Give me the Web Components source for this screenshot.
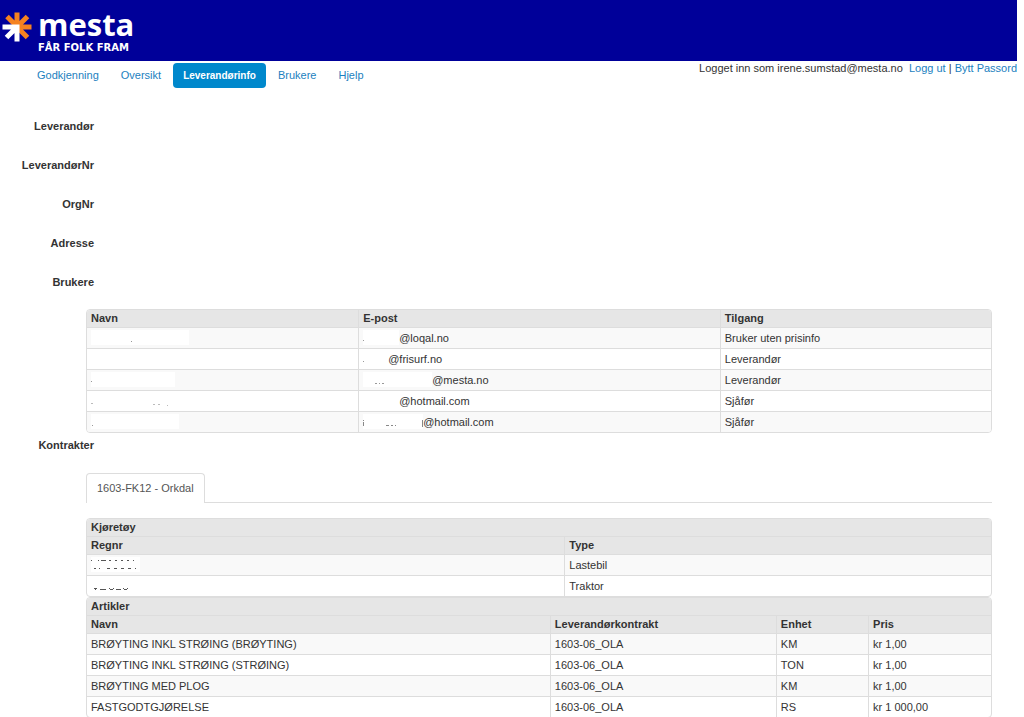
<!DOCTYPE html>
<html lang="no">
<head>
<meta charset="utf-8">
<title>Mesta – Leverandørinfo</title>
<style>
  body { margin: 0 7px 0 0; background: #fff; color: #333; font: 11px/20px "Liberation Sans", Arial, sans-serif; }
</style>
</head>
<body>
<mesta-header></mesta-header>
<mesta-nav user="irene.sumstad@mesta.no"></mesta-nav>
<supplier-page></supplier-page>

<script>
class MestaHeader extends HTMLElement {
  constructor() {
    super();
    this.attachShadow({ mode: 'open' }).innerHTML = `
      <style>
        :host { display: block; background: #000099; color: #fff; }
        .brand { display: flex; gap: 6px; height: 61px; padding-left: 2px; box-sizing: border-box; }
        svg { width: 30px; height: 30px; margin-top: 12px; }
        .words { display: flex; flex-direction: column; gap: 3px; padding-top: 8px; }
        .name { font: bold 31px/32px "Open Sans", sans-serif; }
        .motto { font: bold 10px/10px "DejaVu Sans", sans-serif; }
      </style>
      <div class="brand">
        <svg viewBox="0 0 30 30" aria-hidden="true" fill="none" stroke-width="5">
          <path stroke="#f58220" d="M15 0.5V12M14 15H29.5M5 4.5L14 13.5M25.5 4.5L16 14M16 16L25.5 25.5"/>
          <path stroke="#fff" d="M0.5 15H15V29.5M15 15L4.5 25.5"/>
        </svg>
        <div class="words"><span class="name">mesta</span><span class="motto">FÅR FOLK FRAM</span></div>
      </div>`;
  }
}
customElements.define('mesta-header', MestaHeader);

class MestaNav extends HTMLElement {
  constructor() {
    super();
    const items = ['Godkjenning', 'Oversikt', 'Leverandørinfo', 'Brukere', 'Hjelp'];
    this.attachShadow({ mode: 'open' }).innerHTML = `
      <style>
        :host { display: flex; justify-content: space-between; align-items: flex-start; }
        nav { display: flex; gap: 2px; padding: 2px 0 0 27px; }
        a { color: #1c7fc0; text-decoration: none; }
        nav a { padding: 0 10px; line-height: 25px; border-radius: 4px; }
        nav a.active { background: #0088cc; color: #fff; font-weight: bold; font-size: 10px; }
        .user { line-height: 15px; white-space: nowrap; }
      </style>
      <nav>${items.map(t => `<a href="#"${t === 'Leverandørinfo' ? ' class="active" aria-current="page"' : ''}>${t}</a>`).join('')}</nav>
      <div class="user">Logget inn som ${this.getAttribute('user')}&nbsp; <a href="#">Logg ut</a> | <a href="#">Bytt Passord</a></div>`;
  }
}
customElements.define('mesta-nav', MestaNav);

/* White patch that hides personal data; marks are the few strokes left visible. */
class HiddenText extends HTMLElement {
  constructor() {
    super();
    this.attachShadow({ mode: 'open' }).innerHTML = `
      <style>
        :host { display: inline-block; vertical-align: top; }
        svg { display: block; height: 18px; }
      </style>
      <svg width="${this.getAttribute('w')}" aria-hidden="true">
        <rect y="2" width="100%" height="15" fill="#fff"/>
        <path d="${this.getAttribute('marks') || ''}" fill="none" stroke="${this.getAttribute('ink') || '#777'}"/>
      </svg>`;
  }
}
customElements.define('hidden-text', HiddenText);

class DataTable extends HTMLElement {
  set data({ title, widths, head, rows }) {
    const root = this.shadowRoot || this.attachShadow({ mode: 'open' });
    root.innerHTML = `
      <style>
        :host { display: block; }
        table { width: 100%; table-layout: fixed; border: 1px solid #ddd; border-radius: 4px;
                border-collapse: separate; border-spacing: 0; overflow: hidden; }
        th, td { padding: 0 4px; text-align: left; border-top: 1px solid #ddd; white-space: nowrap; }
        th { background: #e6e6e6; line-height: 17px; }
        td { line-height: 20px; }
        td + td, th + th { border-left: 1px solid #ddd; }
        thead tr:first-child th { border-top: 0; }
        tbody tr:nth-child(odd) td { background: #f9f9f9; }
      </style>
      <table>
        <colgroup>${widths.map(w => `<col style="width:${w}">`).join('')}</colgroup>
        <thead>
          ${title ? `<tr><th colspan="${head.length}">${title}</th></tr>` : ''}
          <tr>${head.map(h => `<th scope="col">${h}</th>`).join('')}</tr>
        </thead>
        <tbody>${rows.map(r => `<tr>${r.map(c => `<td>${c}</td>`).join('')}</tr>`).join('')}</tbody>
      </table>`;
  }
}
customElements.define('data-table', DataTable);

class FieldRow extends HTMLElement {
  constructor() {
    super();
    this.attachShadow({ mode: 'open' }).innerHTML = `
      <style>
        :host { display: block; }
        .label { width: 94px; text-align: right; font-weight: bold; }
      </style>
      <div class="label"><slot></slot></div>`;
  }
}
customElements.define('field-row', FieldRow);

class TabBar extends HTMLElement {
  constructor() {
    super();
    this.attachShadow({ mode: 'open' }).innerHTML = `
      <style>
        :host { display: flex; border-bottom: 1px solid #ddd; }
        a { padding: 0 10px; border: 1px solid #ddd; border-bottom: 0; border-radius: 4px 4px 0 0;
            margin-bottom: -1px; line-height: 29px; background: #fff; color: #555; text-decoration: none; }
      </style>
      <a href="#"><slot></slot></a>`;
  }
}
customElements.define('tab-bar', TabBar);

class SupplierPage extends HTMLElement {
  constructor() {
    super();
    const root = this.attachShadow({ mode: 'open' });
    root.innerHTML = `
      <style>
        :host { display: block; padding-top: 28px; }
        .fields { display: grid; gap: 19px; }
        .block { margin: 17px 25px 0 86px; }
        .contracts { margin-top: 18px; }
        tab-bar { margin-bottom: 15px; }
        .contract { margin-top: 2px; }
      </style>
      <div class="fields">
        <field-row>Leverandør</field-row>
        <field-row>LeverandørNr</field-row>
        <field-row>OrgNr</field-row>
        <field-row>Adresse</field-row>
        <field-row>Brukere</field-row>
      </div>
      <div class="block"><data-table id="users"></data-table></div>
      <field-row class="contract">Kontrakter</field-row>
      <div class="block contracts">
        <tab-bar>1603-FK12 - Orkdal</tab-bar>
        <data-table id="vehicles"></data-table>
        <data-table id="articles"></data-table>
      </div>`;
    const hide = (w, marks = '', ink = '#999') => `<hidden-text w="${w}" marks="${marks}" ink="${ink}"></hidden-text>`;
    root.getElementById('users').data = {
      widths: ['30%', '40%', '30%'],
      head: ['Navn', 'E-post', 'Tilgang'],
      rows: [
        [hide(98, 'M40 13.5h1'), hide(36, 'M0 12.5h1') + '@loqal.no', 'Bruker uten prisinfo'],
        [hide(84), hide(25, 'M0 12.5h1') + '@frisurf.no', 'Leverandør'],
        [hide(84, 'M0 11.5h1'), hide(69, 'M12 13.5h2m2 0h1m2 0h2') + '@mesta.no', 'Leverandør'],
        [hide(84, 'M0 12.5h2M62 13.5h2m3 0h2M76 14.5h1', '#bbb'), hide(36) + '@hotmail.com', 'Sjåfør'],
        [hide(88, 'M1 13.5h1'), hide(60, 'M0.5 8v1m0 1v4M23 13.5h3m2 0h2m2 0h1M59.5 8v7', '#888') + '@hotmail.com', 'Sjåfør']
      ]
    };
    root.getElementById('vehicles').data = {
      title: 'Kjøretøy',
      widths: ['auto', '47.2%'],
      head: ['Regnr', 'Type'],
      rows: [
        [hide(49, 'M0 5.5h1m6 0h1m2 0h5m3 0h2m4 0h2m4 0h2m4 0h2m4 0h1M3 13.5h2m3 0h1m7 0h3m4 0h3m4 0h3m4 0h3m4 0h1', '#555'), 'Lastebil'],
        [hide(44, 'M3 12.5h3M4 13.5h1m4 0h6M18 12.5h1m3 0h1M19 13.5h3m3 0h5M32 12.5h1m3 0h1M33 13.5h3', '#555'), 'Traktor']
      ]
    };
    root.getElementById('articles').data = {
      title: 'Artikler',
      widths: ['51.2%', '25%', '10.2%', '13.6%'],
      head: ['Navn', 'Leverandørkontrakt', 'Enhet', 'Pris'],
      rows: [
        ['BRØYTING INKL STRØING (BRØYTING)', '1603-06_OLA', 'KM', 'kr 1,00'],
        ['BRØYTING INKL STRØING (STRØING)', '1603-06_OLA', 'TON', 'kr 1,00'],
        ['BRØYTING MED PLOG', '1603-06_OLA', 'KM', 'kr 1,00'],
        ['FASTGODTGJØRELSE', '1603-06_OLA', 'RS', 'kr 1 000,00']
      ]
    };
  }
}
customElements.define('supplier-page', SupplierPage);
</script>
</body>
</html>
